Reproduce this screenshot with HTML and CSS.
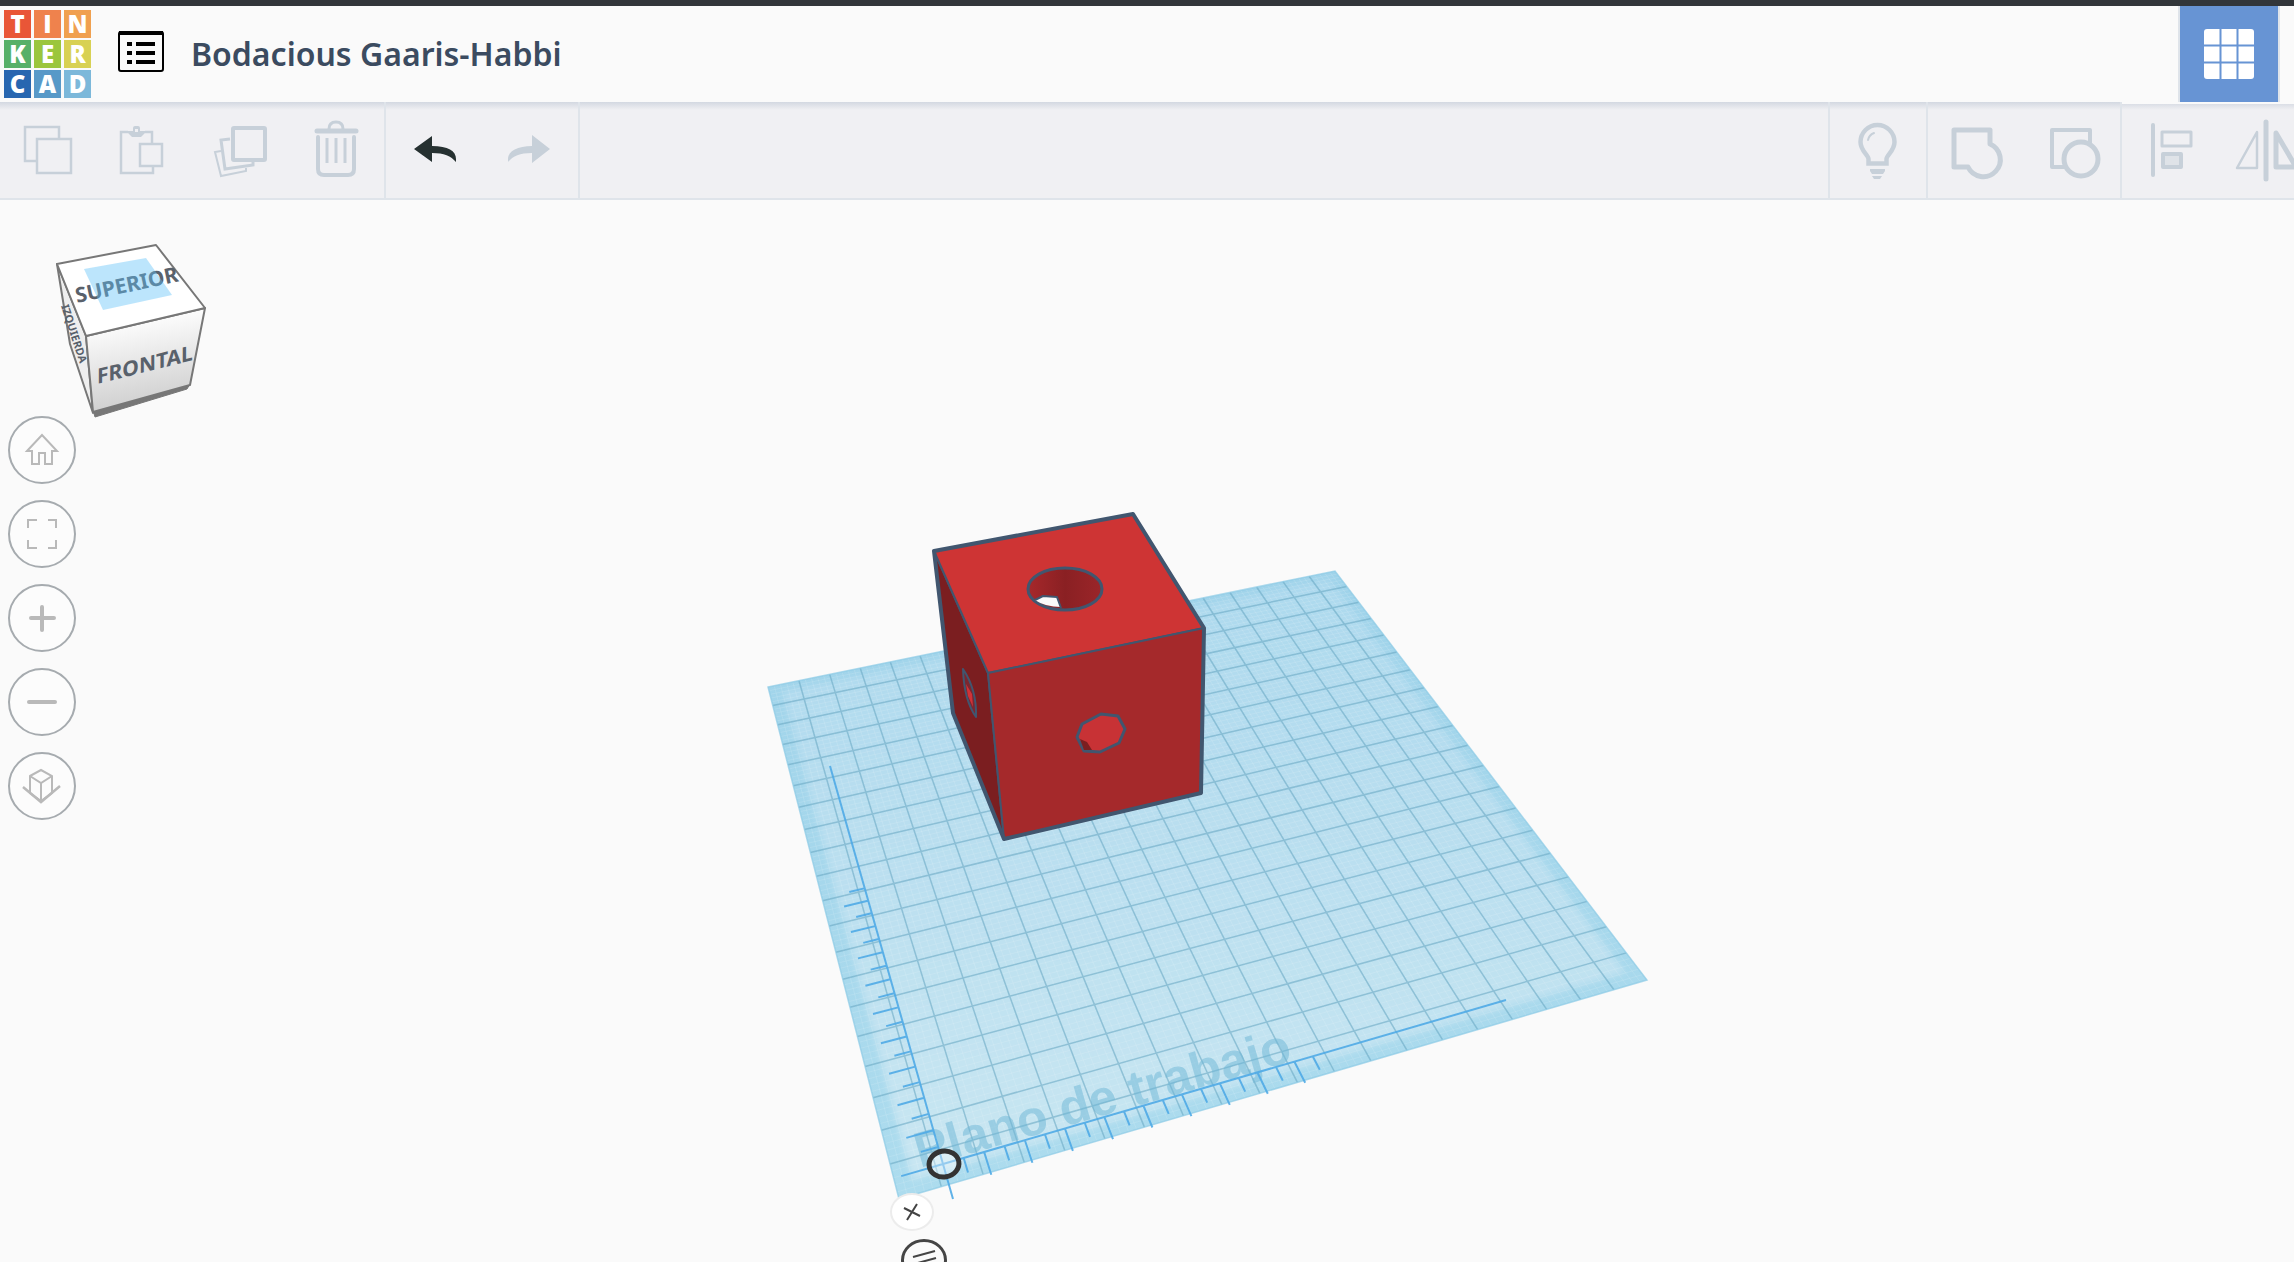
FILE: index.html
```html
<!DOCTYPE html>
<html lang="es">
<head>
<meta charset="utf-8">
<title>Bodacious Gaaris-Habbi | Tinkercad</title>
<link rel="stylesheet" href="styles.css">
</head>
<body>
<header class="header">
  <a class="logo" href="#" aria-label="Tinkercad">
    <span class="tile red">T</span><span class="tile coral">I</span><span class="tile orange">N</span>
    <span class="tile green">K</span><span class="tile lime">E</span><span class="tile yellow">R</span>
    <span class="tile navy">C</span><span class="tile blue">A</span><span class="tile sky">D</span>
  </a>
  <button class="list-button" aria-label="Lista de diseños">
    <svg width="46" height="42" viewBox="0 0 46 42"><rect x="1" y="2" width="44" height="39" rx="2" fill="#fafafa" stroke="#000" stroke-width="2"/><path d="M1 3h44" stroke="#000" stroke-width="4"/><path d="M9 14h5M9 23h5M9 32h5M18 14h19M18 23h19M18 32h19" stroke="#000" stroke-width="4"/></svg>
  </button>
  <h1 class="title">Bodacious Gaaris-Habbi</h1>
  <button class="grid-button" aria-label="Diseño 3D">
    <svg width="50" height="50" viewBox="0 0 50 50"><rect width="50" height="50" rx="3" fill="#fff"/><path d="M16.500 0v50M33.500 0v50M0 16.500h50M0 33.500h50" stroke="#6794d4" stroke-width="2"/></svg>
  </button>
</header>

<nav class="toolbar" aria-label="Herramientas">
  <div class="group">
    <button class="tool" aria-label="Copiar"><svg class="icon" viewBox="0 0 60 60" stroke-width="2.500"><path d="M18 41H7V7h34v11"/><rect x="19" y="19" width="34" height="34"/></svg></button>
    <button class="tool" aria-label="Pegar"><svg class="icon" viewBox="0 0 60 60" stroke-width="2.500"><path d="M14 12H7v41h32v-6M31 12h7v11"/><rect x="26" y="24" width="22" height="22"/><path class="solid" d="M14 11h5V8q0-2 2-2h3q2 0 2 2v3h5v2l-4 4h-9l-4-4zM21 9v3h3V9z" fill-rule="evenodd"/></svg></button>
    <button class="tool" aria-label="Duplicar"><svg class="icon" viewBox="0 0 60 60" stroke-width="3"><rect x="23" y="8" width="32" height="32" rx="1" stroke-width="4"/><path d="M20 19l-9 1 4 29 28-4v-3"/><path d="M11 31l-6 1 6 24 25-5v-3" stroke-width="2"/></svg></button>
    <button class="tool" aria-label="Suprimir"><svg class="icon" viewBox="0 0 60 60"><path d="M11 11h39" stroke-width="5" stroke-linecap="round"/><path d="M23 9q0-7 7-7t7 7" stroke-width="3"/><path d="M12 17v32q0 6 6 6h24q6 0 6-6V17" stroke-width="4" stroke-linecap="round"/><path d="M21 18v25M30 18v25M39 18v25" stroke-width="3"/></svg></button>
  </div>
  <div class="group">
    <button class="tool active" aria-label="Deshacer"><svg class="icon" viewBox="0 0 60 60"><path class="solid" d="M10 29 28 16v10c16 0 24 5 24 13v3c-5-6-12-9-24-9v9z"/></svg></button>
    <button class="tool" aria-label="Rehacer"><svg class="icon" viewBox="0 0 60 60"><path class="solid" d="M50 29 32 15v11C18 26 8 31 8 39v3c5-6 12-9 24-9v10z"/></svg></button>
  </div>
  <div class="group right">
    <button class="tool" aria-label="Mostrar todo"><svg class="icon" viewBox="0 0 60 60" stroke-width="4.500"><path d="M20.500 43.500V39c0-4-8-8-8-17a17 17 0 0 1 34 0c0 9-8 13-8 17v4.500z"/><path d="M20 20q1-5 6-7" stroke-width="2" stroke-linecap="round"/><path class="solid" d="M22 49h15v2l-2 3H24l-2-3zM24 56h10l-2 3h-6z"/></svg></button>
  </div>
  <div class="group">
    <button class="tool" aria-label="Agrupar"><svg class="icon" viewBox="0 0 60 60" stroke-width="5" stroke-linejoin="round"><path d="M44 10H8v37h14a17 17 0 1 0 22-23z"/></svg></button>
    <button class="tool" aria-label="Desagrupar"><svg class="icon" viewBox="0 0 60 60" stroke-width="4" stroke-linejoin="round"><path d="M23 47H10V10h38v13"/><circle cx="39" cy="39" r="17" stroke-width="5"/></svg></button>
  </div>
  <div class="group last">
    <button class="tool" aria-label="Alinear"><svg class="icon" viewBox="0 0 60 60" stroke-width="3" stroke-linejoin="round"><path d="M12 5v50" stroke-width="4" stroke-linecap="round"/><rect x="21" y="12" width="29" height="14"/><rect x="22" y="34" width="18" height="13" stroke-width="4" fill="#dfe3e8"/></svg></button>
    <button class="tool" aria-label="Simetría"><svg class="icon" viewBox="0 0 60 60" stroke-width="2.500" stroke-linejoin="round"><path d="M-2 48 18 12v36z"/><path d="M27 2v57" stroke-width="5" stroke-linecap="round"/><path d="M37 13v34h20z" stroke-width="5"/></svg></button>
  </div>
</nav>

<main class="workspace">
  <div class="scene">
    <svg class="scene-art" viewBox="0 200 2294 1062">
      <defs>
        <linearGradient id="sheet" x1="0" y1="0" x2="0" y2="1"><stop offset="0" stop-color="#add9ee"/><stop offset="1" stop-color="#c9e6f2"/></linearGradient>
        <linearGradient id="rim" x1="0" y1="0" x2="0" y2="1"><stop offset="0" stop-color="#9fd3ea"/><stop offset="1" stop-color="#addcee"/></linearGradient>
        <linearGradient id="well" x1="0" y1="0" x2="1" y2="0"><stop offset="0" stop-color="#a6282b"/><stop offset=".5" stop-color="#8a2023"/><stop offset="1" stop-color="#9b2529"/></linearGradient>
        <filter id="soft"><feGaussianBlur stdDeviation="3"/></filter>
      </defs>
      <polygon points="768,687 1335,571 1647,980 899,1199" fill="url(#rim)"/>
      <path id="inner" fill="url(#sheet)" filter="url(#soft)"/>
      <path id="fine" fill="none" stroke="#fff" stroke-width="1" opacity=".12"/>
      <path id="major" fill="none" stroke="#5fa3bf" stroke-width="1.500" opacity=".55"/>
      <polygon points="768,687 1335,571 1647,980 899,1199" fill="none" stroke="#8ccbe6" stroke-width="1.500" opacity=".7"/>
      <text class="plane-label" transform="translate(920 1168) rotate(-16)">Plano de trabajo</text>
      <path id="ruler" fill="none" stroke="#4faae6" stroke-width="2" opacity=".9"/>
      <ellipse cx="944" cy="1164" rx="15" ry="13" fill="#fff" fill-opacity=".35" stroke="#333" stroke-width="5" transform="rotate(-10 944 1164)"/>

      <g stroke="#41566f" stroke-width="2" stroke-linejoin="round">
        <polygon points="934,551 988,673 1004,839 953,713" fill="#7b1e20"/>
        <polygon points="934,551 1133,514 1204,628 988,673" fill="#ce3434"/>
        <polygon points="988,673 1204,628 1201,793 1004,839" fill="#a5292b"/>
        <path d="M934 551 1133 514 1204 628 1201 793 1004 839 953 713z" fill="none" stroke-width="4"/>
        <ellipse cx="1065" cy="589" rx="37" ry="21" fill="url(#well)" stroke-width="3"/>
        <path d="M1035 600 1043 596 1057 597 1061 607Q1045 607 1035 600z" fill="#fafafa" stroke="none"/>
        <path d="M1035 600 1043 596 1057 597 1061 608" fill="none" stroke-width="2"/>
        <polygon points="1077,737 1082,724 1101,714 1118,716 1125,729 1119,743 1100,752 1084,751" fill="#c83235" stroke-width="3"/>
        <path d="M1080 739 1087 742 1092 750 1084 750z" fill="#7b1e20" stroke="none"/>
        <path d="M963 669Q977 690 976 717 964 700 963 669z" fill="#7b2730"/>
        <path d="M966 684 972 694 973 707 968 696z" fill="#d13237" stroke="none"/>
      </g>
    </svg>
    <button class="pin close" aria-label="Cerrar regla"><svg width="20" height="18" viewBox="0 0 20 18"><path d="M2 5l16 8M15 1 5 17" stroke="#444" stroke-width="2"/></svg></button>
    <button class="pin menu" aria-label="Opciones de regla"><svg width="30" height="26" viewBox="0 0 30 26"><path d="M4 10l22-6M5 17l22-6M6 24l22-6" stroke="#444" stroke-width="2"/></svg></button>
  </div>

  <aside class="view">
    <svg class="view-cube" viewBox="40 230 180 196" role="img" aria-label="Cubo de vista">
      <defs><linearGradient id="face" x1="0" y1="0" x2=".2" y2="1"><stop offset=".15" stop-color="#fff"/><stop offset="1" stop-color="#cfcfcf"/></linearGradient></defs>
      <path d="M93 410 190 384 187 389 95 417z" fill="#777" stroke="#777"/>
      <g stroke="#777" stroke-width="2" stroke-linejoin="round">
        <path d="M57 264 86 336 93 413 70 344z" fill="#eee"/>
        <path d="M86 336 205 308 190 385 93 412z" fill="url(#face)"/>
        <path d="M57 264 156 245 205 308 86 336z" fill="#fff"/>
      </g>
      <text class="cube-label" transform="translate(77 303) rotate(-12)">SUPERIOR</text>
      <path d="M84 269 146 258 172 295 103 310z" fill="#5fc0f7" opacity=".42"/>
      <text class="cube-label" transform="translate(97 384) skewY(-14)">FRONTAL</text>
      <text class="cube-side" transform="translate(61 306) rotate(72)">IZQUIERDA</text>
    </svg>
    <button class="round" aria-label="Vista de inicio"><svg class="glyph" viewBox="0 0 40 40"><path d="M5 21 20 5 35 21h-5v13h-7V23h-6v11h-7V21z"/></svg></button>
    <button class="round" aria-label="Ajustar todo en vista"><svg class="glyph" viewBox="0 0 40 40"><path d="M6 14V6h9M26 6h8v8M34 26v8h-8M15 34H6v-8"/></svg></button>
    <button class="round" aria-label="Acercar"><svg class="glyph bold" viewBox="0 0 40 40"><path d="M20 9v23M9 20h23"/></svg></button>
    <button class="round" aria-label="Alejar"><svg class="glyph bold" viewBox="0 0 40 40"><path d="M7 20h26"/></svg></button>
    <button class="round" aria-label="Vista ortográfica"><svg class="glyph" viewBox="0 0 40 40"><path d="M8 10 19 4l11 6v17L19 35 8 27zM8 10l11 7 11-7M19 17v18"/><path d="M1 21l18 15 19-16" stroke-width="2.500"/></svg></button>
  </aside>
</main>
<script src="plane.js"></script>
</body>
</html>
```
FILE: styles.css
```css
* { box-sizing: border-box; }
body {
  margin: 0;
  height: 100vh;
  display: flex;
  flex-direction: column;
  overflow: hidden;
  background: #fafafa;
  font-family: "Noto Sans", "Open Sans", sans-serif;
}
button { margin: 0; padding: 0; border: 0; background: none; cursor: pointer; }
svg { display: block; }

.header {
  flex: none;
  height: 102px;
  display: flex;
  align-items: center;
  border-top: 6px solid #32363a;
  background: #fafafa;
}
.logo {
  display: grid;
  grid-template-columns: repeat(3, 27px);
  grid-auto-rows: 28px;
  gap: 2px 3px;
  margin-left: 4px;
  text-decoration: none;
}
.tile {
  display: grid;
  place-items: center;
  color: #fff;
  font: 800 24px/28px "Open Sans", sans-serif;
}
.red { background: #e95637; }
.coral { background: #ef824d; }
.orange { background: #f0a04f; }
.green { background: #57b068; }
.lime { background: #9bc63c; }
.yellow { background: #d8d153; }
.navy { background: #2766b0; }
.blue { background: #5899c8; }
.sky { background: #7cb8da; }
.list-button { margin: 0 27px 6px 27px; }
.title { margin: 0; color: #3b4b60; font-size: 32px; line-height: 48px; font-weight: 600; }
.grid-button {
  display: grid;
  place-items: center;
  align-self: stretch;
  width: 102px;
  margin: 0 14px 0 auto;
  border: solid #dfe4ea;
  border-width: 0 2px;
  background: #6794d4;
}

.toolbar {
  flex: none;
  display: flex;
  height: 98px;
  border-bottom: 2px solid #dfe4ea;
  background: linear-gradient(#d3d8e1, #f0f0f3 8px);
}
.group { display: flex; border-right: 2px solid #dfe4ea; }
.right { margin-left: auto; border-left: 2px solid #dfe4ea; }
.last { width: 172px; border-right: 0; overflow: hidden; box-shadow: inset 0 2px #fafafa; }
.tool { flex: none; width: 96px; display: grid; place-items: center; color: #c7d0d9; }
.last .tool { width: 98px; }
.active { color: #263131; }
.icon { width: 60px; height: 60px; fill: none; stroke: currentColor; overflow: visible; }
.solid { fill: currentColor; stroke: none; }

.workspace { flex: 1; min-height: 0; display: grid; overflow: hidden; }
.scene, .view { grid-area: 1 / 1; }
.scene { position: relative; align-self: start; }
.scene-art { width: 100%; height: auto; }
.plane-label { font: 700 50px "Liberation Sans", sans-serif; fill: #6cb6d6; fill-opacity: .5; }
.pin { position: absolute; display: grid; place-items: center; border-radius: 50%; transform: translate(-50%, -50%); }
.close { left: 39.75%; top: 95.3%; width: 44px; height: 38px; background: #fff; border: 2px solid #ececec; }
.menu { left: 40.3%; top: 99.8%; width: 46px; height: 42px; border: 3px solid #444; }

.view {
  position: relative;
  justify-self: start;
  align-self: start;
  display: flex;
  flex-direction: column;
  gap: 16px;
  padding-left: 8px;
}
.view-cube { width: 180px; height: 196px; margin: 30px 0 -26px 32px; }
.cube-label { font: 700 21px "Noto Sans", sans-serif; fill: #59616b; }
.cube-side { font: 700 11px "Noto Sans", sans-serif; fill: #59616b; }
.round {
  display: grid;
  place-items: center;
  width: 68px;
  height: 68px;
  border: 2px solid #a6abaf;
  border-radius: 50%;
  background: #fcfcfc;
}
.glyph { width: 40px; height: 40px; fill: none; stroke: #b9b9b9; stroke-width: 2; }
.bold { stroke-width: 4; stroke-linecap: round; }
```
FILE: plane.js
```js
// Perspective of the workplane: (u, v) run 0..20 cells across and down.
const SIZE = 20;
const G = 0.09994, H = -0.28367;
const A = 1335 - 768 + G * 1335, B = 899 - 768 + H * 899;
const D = 571 - 687 + G * 571, E = 1199 - 687 + H * 1199;

function project(u, v) {
  const s = u / SIZE, t = v / SIZE, w = 1 + G * s + H * t;
  return [(768 + A * s + B * t) / w, (687 + D * s + E * t) / w];
}
function unproject(x, y) {
  const a = A - G * x, b = B - H * x, c = x - 768;
  const d = D - G * y, e = E - H * y, f = y - 687;
  const det = a * e - b * d;
  return [SIZE * (c * e - b * f) / det, SIZE * (a * f - c * d) / det];
}
function line(u1, v1, u2, v2) {
  return "M" + project(u1, v1).map(n => n.toFixed(1)) + "L" + project(u2, v2).map(n => n.toFixed(1));
}
function mesh(step) {
  let d = "";
  for (let i = step; i < SIZE - step / 2; i += step) d += line(i, 0, i, SIZE) + line(0, i, SIZE, i);
  return d;
}
function draw(id, d) {
  document.getElementById(id).setAttribute("d", d);
}

draw("fine", mesh(0.2));
draw("major", mesh(1));
const inset = 0.4, far = SIZE - inset;
draw("inner", "M" + [project(inset, inset), project(far, inset), project(far, far), project(inset, far)].join("L") + "Z");

// Ruler: two axes from the origin, with a long tick per cell and a short one between.
const [ou, ov] = unproject(943, 1164);
const axisTop = unproject(830, 766), axisEnd = unproject(1506, 1000);
let ruler = line(ou, ov, ...axisTop) + line(ou, ov, ...axisEnd);
ruler += line(ou, ov, ou - 1, ov) + line(ou, ov, ou, ov + 1);
for (let i = 1; i < 20; i++) {
  const len = i % 2 ? 0.42 : 0.66, p = i / 2;
  ruler += line(ou, ov - p, ou - len, ov - p) + line(ou + p, ov, ou + p, ov + len);
}
draw("ruler", ruler);
```
